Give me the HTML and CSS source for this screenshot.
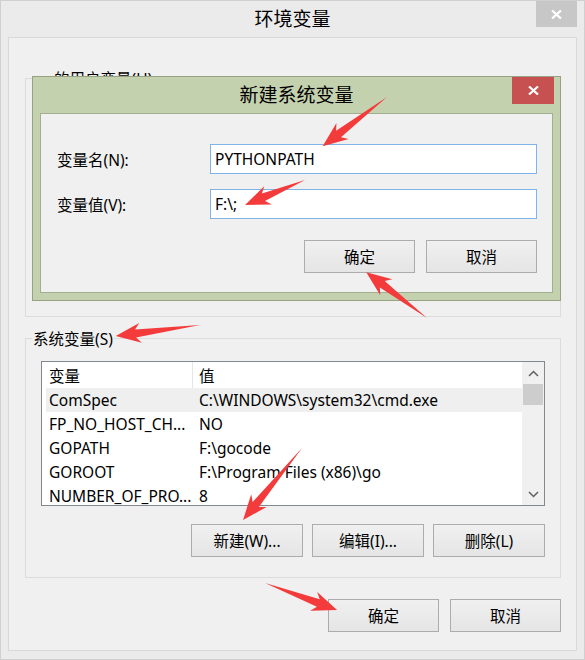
FILE: index.html
```
<!DOCTYPE html>
<html lang="zh-CN">
<head>
<meta charset="utf-8">
<title>环境变量</title>
<link rel="stylesheet" href="styles.css">
</head>
<body>
<div class="window">
  <div class="titlebar">
    <div class="title">环境变量</div>
    <div class="close-btn">
      <svg width="11" height="9" viewBox="0 0 11 9"><path d="M1 0.5 L10 8.5 M10 0.5 L1 8.5" stroke="#fff" stroke-width="2.2" fill="none"/></svg>
    </div>
  </div>
  <div class="client">
    <div class="group user-group">
      <div class="group-label user-label">的用户变量(U)</div>
    </div>
    <div class="group sys-group">
      <div class="group-label">系统变量(S)</div>
      <div class="listbox">
        <div class="list-main">
          <div class="list-header"><div class="h1">变量</div><div class="h2">值</div></div>
          <div class="row selected"><div class="c1">ComSpec</div><div class="c2">C:\WINDOWS\system32\cmd.exe</div></div>
          <div class="row"><div class="c1">FP_NO_HOST_CH...</div><div class="c2">NO</div></div>
          <div class="row"><div class="c1">GOPATH</div><div class="c2">F:\gocode</div></div>
          <div class="row"><div class="c1">GOROOT</div><div class="c2">F:\Program Files (x86)\go</div></div>
          <div class="row"><div class="c1">NUMBER_OF_PRO...</div><div class="c2">8</div></div>
        </div>
        <div class="scrollbar">
          <div class="sb-arrow"><svg width="11" height="7" viewBox="0 0 11 7"><path d="M1 6 L5.5 1.5 L10 6" stroke="#606060" stroke-width="1.5" fill="none"/></svg></div>
          <div class="sb-thumb"></div>
          <div class="sb-track"></div>
          <div class="sb-arrow"><svg width="11" height="7" viewBox="0 0 11 7"><path d="M1 1 L5.5 5.5 L10 1" stroke="#606060" stroke-width="1.5" fill="none"/></svg></div>
        </div>
      </div>
      <div class="list-buttons">
        <div class="btn">新建(W)...</div>
        <div class="btn">编辑(I)...</div>
        <div class="btn">删除(L)</div>
      </div>
    </div>
    <div class="footer">
      <div class="btn">确定</div>
      <div class="btn">取消</div>
    </div>

    <div class="dialog">
      <div class="dlg-titlebar">
        <div class="dlg-title">新建系统变量</div>
        <div class="dlg-close">
          <svg width="11" height="9" viewBox="0 0 11 9"><path d="M1 0.5 L10 8.5 M10 0.5 L1 8.5" stroke="#fff" stroke-width="2.2" fill="none"/></svg>
        </div>
      </div>
      <div class="panel">
        <div class="field-label">变量名(N):</div>
        <div class="input">PYTHONPATH</div>
        <div class="field-label">变量值(V):</div>
        <div class="input">F:\;</div>
        <div class="dlg-buttons">
          <div class="btn">确定</div>
          <div class="btn">取消</div>
        </div>
      </div>
    </div>
  </div>
</div>
<svg class="arrows" width="585" height="660" viewBox="0 0 585 660">
  <g fill="#f43b3b">
    <polygon transform="translate(387 97) rotate(142.6)" points="0,0 61,-4 56,-10 81,0 56,10 61,4"/>
    <polygon transform="translate(305 180) rotate(157.4)" points="0,0 45,-4 40,-10 65,0 40,10 45,4"/>
    <polygon transform="translate(427 318) rotate(-143)" points="0,0 56,-4 51,-10 76,0 51,10 56,4"/>
    <polygon transform="translate(200 325) rotate(172.5)" points="0,0 65,-4 60,-10 85,0 60,10 65,4"/>
    <polygon transform="translate(302 448) rotate(129.3)" points="0,0 73,-4 68,-10 93,0 68,10 73,4"/>
    <polygon transform="translate(265 583) rotate(20.6)" points="0,0 57,-4 52,-10 77,0 52,10 57,4"/>
  </g>
</svg>
</body>
</html>
```
FILE: styles.css
```
body {
  margin: 0;
  position: relative;
  font-family: "Noto Sans", "Noto Sans CJK SC", sans-serif;
  font-size: 15.5px;
  color: #000;
  background: #ebebeb;
}

.window {
  width: 585px;
  height: 660px;
  box-sizing: border-box;
  border: 1px solid #d0d0d0;
  background: #ebebeb;
  padding: 0 7px 8px;
  display: flex;
  flex-direction: column;
}

.titlebar {
  height: 36px;
  flex: none;
  display: grid;
  grid-template-columns: 1fr auto 1fr;
  align-items: center;
}

.title {
  grid-column: 2;
  font-size: 19px;
  line-height: 1;
}

.close-btn {
  grid-column: 3;
  justify-self: end;
  align-self: start;
  width: 41px;
  height: 26px;
  background: #c7c7c7;
  display: flex;
  align-items: center;
  justify-content: center;
}

.client {
  flex: 1;
  position: relative;
  border: 1px solid #d9d9d9;
  background: #f0f0f0;
  display: flex;
  flex-direction: column;
}

.group {
  box-sizing: border-box;
  width: 536px;
  margin-left: 16px;
  border: 1px solid #dcdcdc;
  display: flex;
  flex-direction: column;
  flex: none;
}

.user-group {
  margin-top: 40px;
  height: 239px;
}

.sys-group {
  margin-top: 21px;
  height: 240px;
}

.group-label {
  height: 20px;
  line-height: 20px;
  margin-top: -10px;
  margin-left: 6px;
  padding: 0 1px;
  align-self: flex-start;
  background: #f0f0f0;
}

.user-label {
  margin-left: 27px;
}

.listbox {
  margin: 12px 0 0 15px;
  width: 504px;
  height: 145px;
  box-sizing: border-box;
  border: 1px solid #828790;
  background: #fff;
  display: grid;
  grid-template-columns: 1fr 22px;
  overflow: hidden;
}

.list-main {
  overflow: hidden;
}

.list-header {
  height: 26px;
  display: grid;
  grid-template-columns: 151px 1fr;
  align-items: center;
  background: #fff;
}

.list-header .h1 {
  height: 100%;
  box-sizing: border-box;
  border-right: 1px solid #e5e5e5;
  padding-left: 7px;
  display: flex;
  align-items: center;
}

.list-header .h2 {
  padding-left: 6px;
}

.row {
  height: 24px;
  margin-left: 4px;
  display: grid;
  grid-template-columns: 146px 1fr;
  align-items: center;
  white-space: nowrap;
}

.row.selected {
  background: #efefef;
}

.row .c1 {
  padding-left: 3px;
  overflow: hidden;
}

.row .c2 {
  padding-left: 7px;
}

.scrollbar {
  background: #f0f0f0;
  display: flex;
  flex-direction: column;
}

.sb-arrow {
  height: 22px;
  display: flex;
  align-items: center;
  justify-content: center;
}

.sb-thumb {
  height: 21px;
  margin: 0 1px;
  background: #cdcdcd;
}

.sb-track {
  flex: 1;
}

.btn {
  box-sizing: border-box;
  height: 33px;
  border: 1px solid #acacac;
  background: linear-gradient(#f0f0f0, #e5e5e5);
  display: flex;
  align-items: center;
  justify-content: center;
}

.list-buttons {
  margin: 18px 0 0 15px;
  width: 504px;
  display: flex;
  justify-content: flex-end;
  gap: 9px;
}

.list-buttons .btn {
  width: 112px;
}

.footer {
  margin: 21px 15px 0 0;
  display: flex;
  justify-content: flex-end;
  gap: 11px;
}

.footer .btn {
  width: 111px;
}

.dialog {
  position: absolute;
  left: 23px;
  top: 38px;
  width: 529px;
  height: 225px;
  box-sizing: border-box;
  border: 1px solid #98a283;
  background: #c4d1ae;
  display: flex;
  flex-direction: column;
}

.dlg-titlebar {
  height: 36px;
  flex: none;
  display: grid;
  grid-template-columns: 1fr auto 1fr;
  align-items: center;
}

.dlg-title {
  grid-column: 2;
  font-size: 19px;
  line-height: 1;
}

.dlg-close {
  grid-column: 3;
  justify-self: end;
  align-self: start;
  width: 42px;
  height: 27px;
  margin-right: 6px;
  background: #c75050;
  display: flex;
  align-items: center;
  justify-content: center;
}

.panel {
  flex: 1;
  margin: 0 7px 7px;
  border: 1px solid #a3ae90;
  background: #f0f0f0;
  padding: 30px 15px 0 16px;
  display: grid;
  grid-template-columns: 153px 327px;
  row-gap: 15px;
  align-content: start;
}

.field-label {
  align-self: center;
}

.input {
  height: 30px;
  box-sizing: border-box;
  border: 1px solid #7eb4ea;
  background: #fff;
  padding-left: 4px;
  display: flex;
  align-items: center;
}

.dlg-buttons {
  grid-column: 1 / -1;
  margin-top: 6px;
  display: flex;
  justify-content: flex-end;
  gap: 11px;
}

.dlg-buttons .btn {
  width: 111px;
}

.arrows {
  position: absolute;
  left: 0;
  top: 0;
  pointer-events: none;
}
```
